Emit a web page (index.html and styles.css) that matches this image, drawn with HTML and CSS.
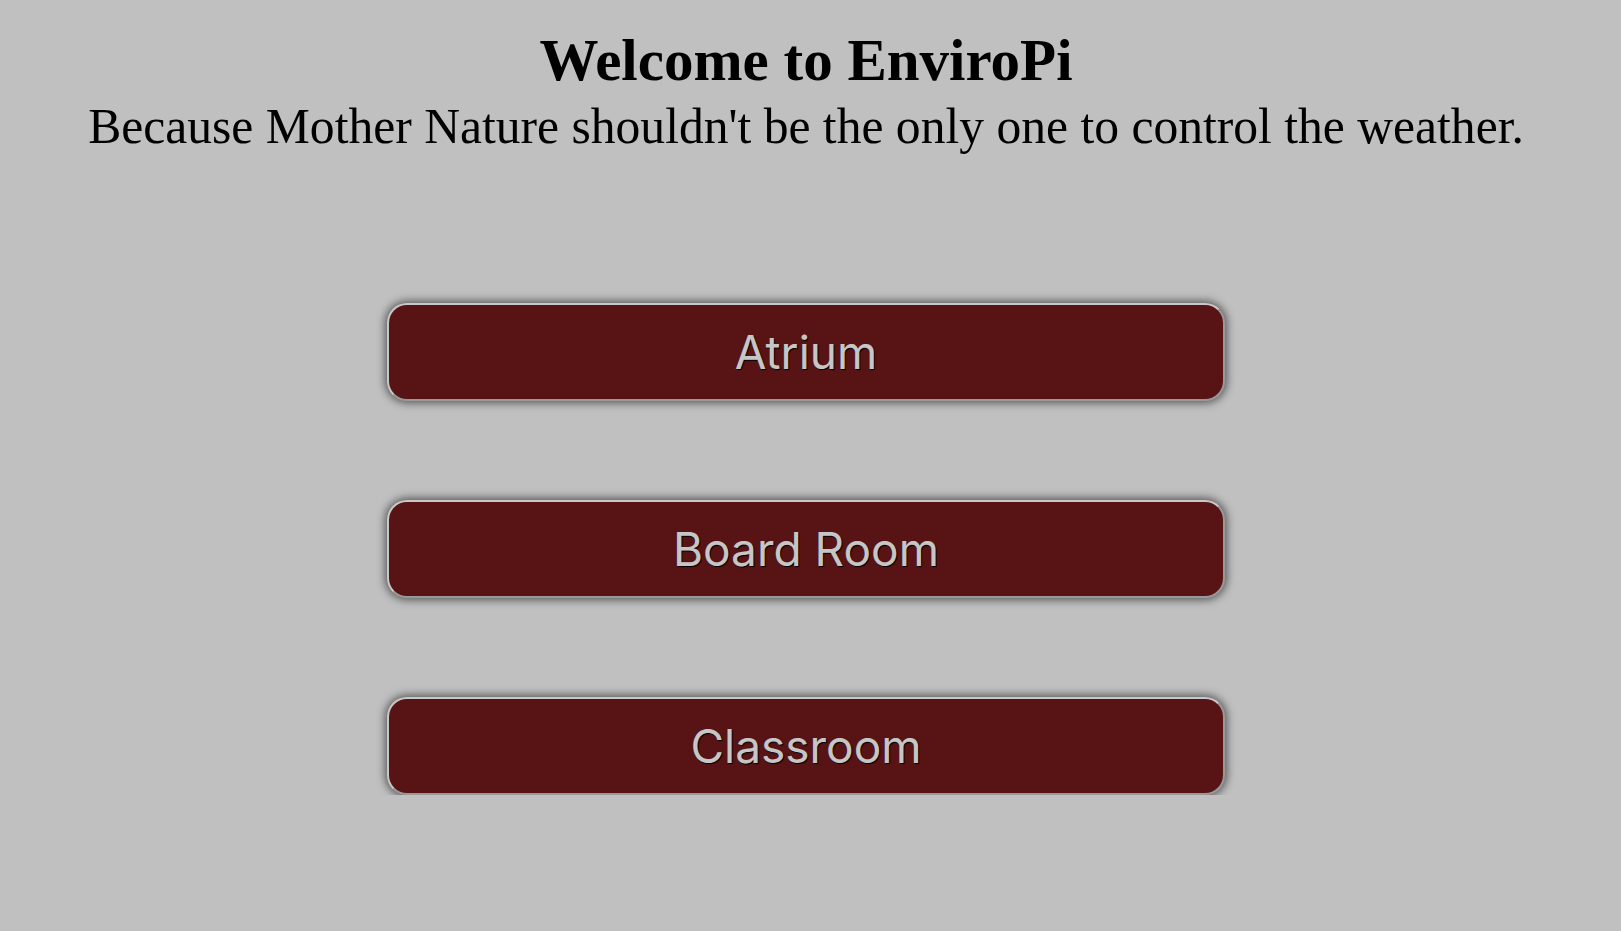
FILE: index.html
```html
<!DOCTYPE html>
<html>
<head>
<meta charset="utf-8">
<title>EnviroPi</title>
<link rel="stylesheet" href="styles.css">
</head>
<body>
<header class="hero">
  <h1 class="title">Welcome to EnviroPi</h1>
  <p class="tagline">Because Mother Nature shouldn't be the only one to control the weather.</p>
</header>
<main class="rooms">
  <button class="room-btn">Atrium</button>
  <button class="room-btn">Board Room</button>
  <button class="room-btn">Classroom</button>
</main>
</body>
</html>
```
FILE: styles.css
```css
html, body {
  margin: 0;
  padding: 0;
  background: #c0c0c0;
}
body {
  padding-right: 9px;
  font-family: "Liberation Serif", "Times New Roman", serif;
  color: #000;
}
.hero {
  display: flex;
  flex-direction: column;
  align-items: center;
  padding-top: 26px;
}
.title {
  margin: 0;
  font-size: 59px;
  line-height: 68px;
  font-weight: bold;
}
.tagline {
  margin: 2px 0 0;
  font-size: 49.6px;
  line-height: 62px;
}
.rooms {
  display: flex;
  flex-direction: column;
  align-items: center;
  gap: 99px;
  padding-top: 145px;
}
.room-btn {
  box-sizing: border-box;
  width: 838px;
  height: 98px;
  background: #581414;
  border: 2px solid #c8c8c8;
  border-right-color: #999;
  border-bottom-color: #999;
  border-radius: 20px;
  box-shadow: 0 0 8px 2px rgba(0,0,0,0.55);
  color: #c6c6c6;
  font-family: Inter, "Noto Sans", sans-serif;
  font-size: 46px;
  text-shadow: 1px 1px 1px #000;
  padding: 0;
  cursor: pointer;
}
```
